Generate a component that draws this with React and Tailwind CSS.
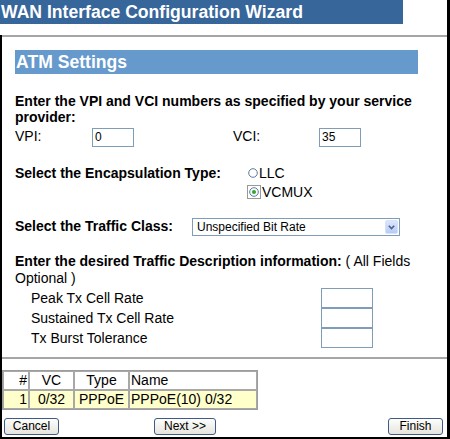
import React from "react";

const rows = [
  { id: "1", vc: "0/32", type: "PPPoE", name: "PPPoE(10) 0/32" },
];

const TextBox = ({ value = "", className = "" }) => (
  <div
    className={`border border-[#7f9db9] bg-white text-[12px] leading-[16px] pl-[2px] text-black ${className}`}
  >
    {value}
  </div>
);

const XpButton = ({ label, className = "" }) => (
  <button
    className={`h-[17px] rounded-[3px] border border-[#3d5b85] bg-gradient-to-b from-[#fdfdfb] to-[#e6e5de] text-[12px] leading-[15px] text-black ${className}`}
  >
    {label}
  </button>
);

const App = () => {
  return (
    <div className="w-[450px] h-[439px] bg-white border-r-[3px] border-black flex flex-col font-['Liberation_Sans',Arial,sans-serif] text-black overflow-hidden">
      {/* Wizard title */}
      <div className="w-[403px] h-[24px] shrink-0 bg-[#36669a] text-white font-bold text-[17.6px] leading-[24px] pl-[1px]">
        WAN Interface Configuration Wizard
      </div>

      <div className="mt-[11px] flex-1 flex flex-col border-l-2 border-b-2 border-black">
        <div className="h-[2px] shrink-0 bg-[#a6a6a6]" />

        {/* Section header */}
        <div className="mt-[13px] ml-[13px] w-[403px] h-[24px] shrink-0 bg-[#6699cc] text-white font-bold text-[17.6px] leading-[24px] pl-[1px]">
          ATM Settings
        </div>

        <p className="mt-[19px] ml-[13px] w-[410px] font-bold text-[14px] leading-[16px]">
          Enter the VPI and VCI numbers as specified by your service provider:
        </p>

        {/* VPI / VCI */}
        <div className="mt-[3px] ml-[13px] flex items-start text-[14px] leading-[16px]">
          <span className="w-[77px]">VPI:</span>
          <TextBox value="0" className="w-[42px] h-[19px]" />
          <span className="ml-[99px] w-[86px]">VCI:</span>
          <TextBox value="35" className="w-[42px] h-[19px]" />
        </div>

        {/* Encapsulation */}
        <div className="mt-[17px] ml-[13px] flex items-start text-[14px] leading-[18.5px]">
          <span className="w-[232px] font-bold">Select the Encapsulation Type:</span>
          <div className="flex flex-col">
            <div className="flex items-center">
              <svg width="12" height="12" viewBox="0 0 12 12" className="shrink-0">
                <circle cx="6" cy="6" r="4.3" fill="#fff" stroke="#5a7aa0" strokeWidth="1" />
              </svg>
              <span>LLC</span>
            </div>
            <div className="flex items-center">
              <svg width="14" height="14" viewBox="0 0 14 14" className="shrink-0">
                <rect x="0.5" y="0.5" width="13" height="13" fill="none" stroke="#333" strokeWidth="1" strokeDasharray="1 1" />
                <circle cx="7" cy="7" r="4.3" fill="#fff" stroke="#5a7aa0" strokeWidth="1" />
                <circle cx="7" cy="7" r="2" fill="#2fa82f" />
              </svg>
              <span className="ml-[1px]">VCMUX</span>
            </div>
          </div>
        </div>

        {/* Traffic class */}
        <div className="mt-[17px] ml-[13px] flex items-start text-[14px] leading-[16px]">
          <span className="w-[177px] font-bold">Select the Traffic Class:</span>
          <div className="w-[208px] h-[18px] border border-[#7f9db9] bg-white flex items-center justify-between">
            <span className="pl-[4px] text-[12px] leading-[16px]">Unspecified Bit Rate</span>
            <div className="mr-[1px] w-[13px] h-[14px] rounded-[2px] border border-[#d7e2f8] bg-gradient-to-b from-[#dbe6fc] to-[#b7cbf5] flex items-center justify-center">
              <svg width="7" height="5" viewBox="0 0 7 5">
                <path d="M0.8 0.8 L3.5 3.6 L6.2 0.8" fill="none" stroke="#4d6185" strokeWidth="1.6" />
              </svg>
            </div>
          </div>
        </div>

        {/* Traffic description */}
        <p className="mt-[17px] ml-[13px] w-[410px] text-[14px] leading-[17px]">
          <span className="font-bold">Enter the desired Traffic Description information:</span> ( All Fields Optional )
        </p>

        <div className="mt-[1px] ml-[29px] flex flex-col text-[14px] leading-[20px]">
          {["Peak Tx Cell Rate", "Sustained Tx Cell Rate", "Tx Burst Tolerance"].map((label) => (
            <div key={label} className="flex items-start">
              <span className="w-[290px]">{label}</span>
              <TextBox className="w-[52px] h-[20px]" />
            </div>
          ))}
        </div>

        <div className="mt-[9px] h-[2px] shrink-0 bg-[#a6a6a6]" />

        {/* VC list */}
        <table className="mt-[11px] w-[256px] border border-[#9c9c9c] border-separate border-spacing-0 text-[14px] leading-[17px]">
          <thead>
            <tr className="bg-white">
              <th className="w-[26px] border border-[#a8a8a8] font-normal text-right pr-[1px]">#</th>
              <th className="w-[45px] border border-[#a8a8a8] font-normal text-center">VC</th>
              <th className="w-[55px] border border-[#a8a8a8] font-normal text-center">Type</th>
              <th className="border border-[#a8a8a8] font-normal text-left pl-[1px]">Name</th>
            </tr>
          </thead>
          <tbody>
            {rows.map((r) => (
              <tr key={r.id} className="bg-[#ffffcc]">
                <td className="border border-[#a8a8a8] text-right pr-[1px]">{r.id}</td>
                <td className="border border-[#a8a8a8] text-center">{r.vc}</td>
                <td className="border border-[#a8a8a8] text-center">{r.type}</td>
                <td className="border border-[#a8a8a8] text-left pl-[1px]">{r.name}</td>
              </tr>
            ))}
          </tbody>
        </table>

        {/* Navigation */}
        <div className="mt-[8px] flex items-start">
          <XpButton label="Cancel" className="ml-[2px] w-[55px]" />
          <XpButton label="Next >>" className="ml-[95px] w-[62px]" />
          <XpButton label="Finish" className="ml-[172px] w-[55px]" />
        </div>
      </div>
    </div>
  );
};

export default App;
